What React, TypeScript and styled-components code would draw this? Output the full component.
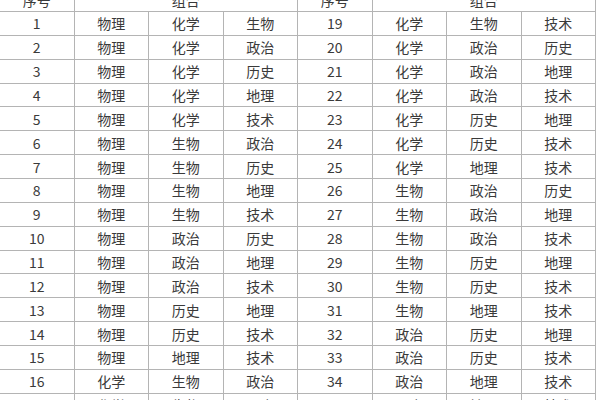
import React from "react";
import styled, {createGlobalStyle} from "styled-components";

const GlobalStyle = createGlobalStyle`
  html, body {
    margin: 0;
    padding: 0;
    background: #ffffff;
    overflow: hidden;
  }
`;

const Page = styled.div`
  width: 600px;
  height: 400px;
  overflow: hidden;
  background: #ffffff;
`;

const Table = styled.table`
  width: 597px;
  margin: -13px 0 0 -1px;
  border-collapse: collapse;
  table-layout: fixed;
  font-family: "Noto Sans CJK SC", "Noto Sans", sans-serif;
  font-size: 14px;
  color: #3a3a3a;
`;

const Row = styled.tr<{ head?: boolean }>`
  height: ${(props) => (props.head ? 24 : 23.86)}px;
`;

const Cell = styled.td`
  border: 1px solid #b4b4b4;
  text-align: center;
  vertical-align: middle;
  padding: 0;
  line-height: 18px;
  white-space: nowrap;
`;

const left: [number, string, string, string][] = [
    [1, "物理", "化学", "生物"],
    [2, "物理", "化学", "政治"],
    [3, "物理", "化学", "历史"],
    [4, "物理", "化学", "地理"],
    [5, "物理", "化学", "技术"],
    [6, "物理", "生物", "政治"],
    [7, "物理", "生物", "历史"],
    [8, "物理", "生物", "地理"],
    [9, "物理", "生物", "技术"],
    [10, "物理", "政治", "历史"],
    [11, "物理", "政治", "地理"],
    [12, "物理", "政治", "技术"],
    [13, "物理", "历史", "地理"],
    [14, "物理", "历史", "技术"],
    [15, "物理", "地理", "技术"],
    [16, "化学", "生物", "政治"],
    [17, "化学", "生物", "历史"],
];

const right: [number, string, string, string][] = [
    [19, "化学", "生物", "技术"],
    [20, "化学", "政治", "历史"],
    [21, "化学", "政治", "地理"],
    [22, "化学", "政治", "技术"],
    [23, "化学", "历史", "地理"],
    [24, "化学", "历史", "技术"],
    [25, "化学", "地理", "技术"],
    [26, "生物", "政治", "历史"],
    [27, "生物", "政治", "地理"],
    [28, "生物", "政治", "技术"],
    [29, "生物", "历史", "地理"],
    [30, "生物", "历史", "技术"],
    [31, "生物", "地理", "技术"],
    [32, "政治", "历史", "地理"],
    [33, "政治", "历史", "技术"],
    [34, "政治", "地理", "技术"],
    [35, "历史", "地理", "技术"],
];

export default function App() {
    return (
        <Page>
            <GlobalStyle/>
            <Table>
                <colgroup>
                    {Array.from({length: 8}).map((_, i) => (
                        <col key={i} style={{width: "12.5%"}}/>
                    ))}
                </colgroup>
                <tbody>
                <Row head>
                    <Cell>序号</Cell>
                    <Cell colSpan={3}>组合</Cell>
                    <Cell>序号</Cell>
                    <Cell colSpan={3}>组合</Cell>
                </Row>
                {left.map((l, i) => {
                    const r = right[i];
                    return (
                        <Row key={l[0]}>
                            {l.map((v, j) => <Cell key={"l" + j}>{v}</Cell>)}
                            {r.map((v, j) => <Cell key={"r" + j}>{v}</Cell>)}
                        </Row>
                    );
                })}
                </tbody>
            </Table>
        </Page>
    );
}
